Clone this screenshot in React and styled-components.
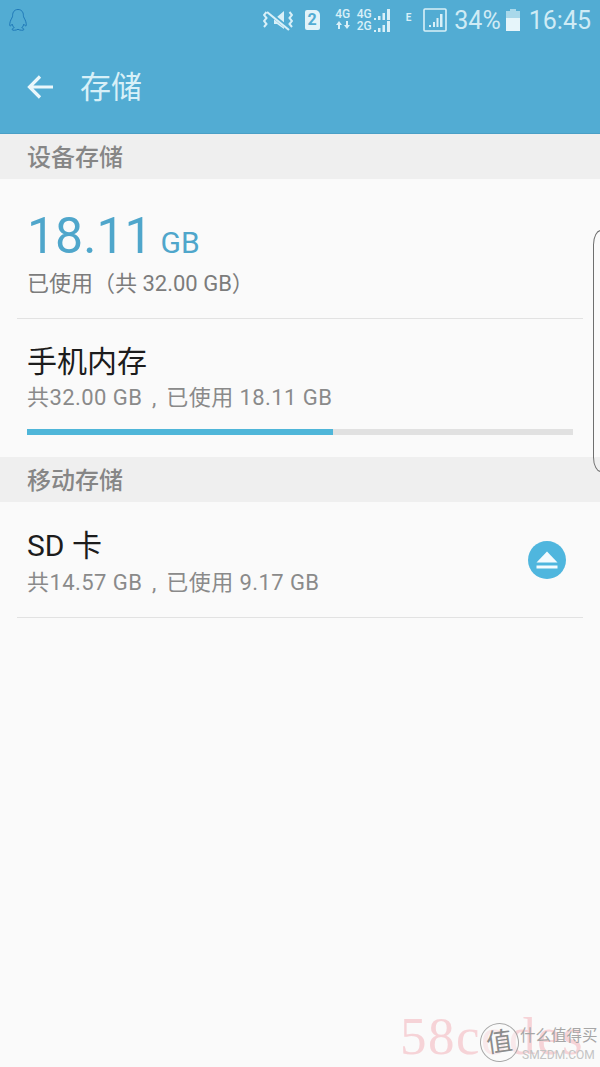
import React from 'react';
import styled, { createGlobalStyle } from 'styled-components';

const FONT = `Roboto, "Noto Sans CJK SC", sans-serif`;

const GlobalStyle = createGlobalStyle`
	html, body {
		margin: 0;
		padding: 0;
		background: #fafafa;
	}
`;

const App = () => (
	<Page>
		<GlobalStyle />
		<AppBar>
			<StatusBar>
				<QQIcon />
				<StatusRight>
					<MuteIcon />
					<SimBadge>2</SimBadge>
					<NetIcons />
					<EdgeLabel>E</EdgeLabel>
					<SignalIcon />
					<StatusText>34%</StatusText>
					<BatteryIcon />
					<StatusText $time>16:45</StatusText>
				</StatusRight>
			</StatusBar>
			<TitleRow>
				<BackIcon />
				<Title>存储</Title>
			</TitleRow>
		</AppBar>

		<SectionHeader>设备存储</SectionHeader>
		<Summary>
			<UsedAmount>
				18.11<UsedUnit>GB</UsedUnit>
			</UsedAmount>
			<SummaryNote>已使用（共 32.00 GB）</SummaryNote>
		</Summary>
		<StorageRow $compact>
			<RowText $compact>
				<RowTitle>手机内存</RowTitle>
				<RowSub>
					共32.00 GB<Comma>,</Comma>已使用 18.11 GB
				</RowSub>
			</RowText>
		</StorageRow>
		<ProgressTrack>
			<ProgressFill style={{ width: '56%' }} />
		</ProgressTrack>

		<SectionHeader>移动存储</SectionHeader>
		<StorageRow>
			<RowText>
				<RowTitle>SD 卡</RowTitle>
				<RowSub>
					共14.57 GB<Comma>,</Comma>已使用 9.17 GB
				</RowSub>
			</RowText>
			<EjectIcon />
		</StorageRow>
		<Divider />

		<ScrollHandle />
		<Watermark>
			<WatermarkSite>58codes</WatermarkSite>
			<WatermarkBadge>值</WatermarkBadge>
			<WatermarkText>
				<span>什么值得买</span>
				<small>SMZDM.COM</small>
			</WatermarkText>
		</Watermark>
	</Page>
);

export default App;

const QQIcon = () => (
	<svg width='20' height='24' viewBox='0 0 20 24' fill='none' stroke='#1e78b8' strokeWidth='1'>
		<path d='M10 1.5c-3.6 0-5.4 2.7-5.4 6 0 1-.2 1.5-.8 2.6-1.2 2.1-2.4 5-2 7.6.9.5 1.7-.4 2.4-1.5.3 1.4 1 2.6 2 3.5-1 .4-2.2.9-2 2 .3.8 3.8.8 5.8-.4 2 1.2 5.5 1.2 5.8.4.2-1.1-1-1.6-2-2 1-.9 1.7-2.1 2-3.5.7 1.1 1.5 2 2.4 1.5.4-2.6-.8-5.5-2-7.6-.6-1.100-.8-1.600-.8-2.600 0-3.300-1.800-6-5.400-6z' />
	</svg>
);

const MuteIcon = () => (
	<svg width='30' height='24' viewBox='0 0 30 24' fill='none'>
		<path d='M11 9h3l7-6v18l-7-5h-3z' fill='#d9f0f8' />
		<path d='M4 3l22 18' stroke='#52acd3' strokeWidth='4' />
		<path d='M4 4l22 18' stroke='#d9f0f8' strokeWidth='2.2' />
		<path d='M3.5 4L1 7l2.5 3L1 13l2.5 3L1 19M26.500 4L29 7l-2.500 3L29 13l-2.500 3L29 19' stroke='#d9f0f8' strokeWidth='2' />
	</svg>
);

const NetIcons = () => (
	<NetGroup>
		<NetColumn>
			<NetLabel>4G</NetLabel>
			<svg width='16' height='8' viewBox='0 0 16 8' fill='#d9f0f8'>
				<path d='M4 0l3 4H5v4H3V4H1zM12 8L9 4h2V0h2v4h2z' />
			</svg>
		</NetColumn>
		<NetColumn>
			<NetLine>
				<NetLabel>4G</NetLabel>
				<MiniBars />
			</NetLine>
			<NetLine>
				<NetLabel>2G</NetLabel>
				<MiniBars />
			</NetLine>
		</NetColumn>
	</NetGroup>
);

const MiniBars = () => (
	<svg width='18' height='11' viewBox='0 0 18 11' fill='#d9f0f8'>
		<rect x='2' y='9' width='2' height='2' />
		<rect x='6' y='7' width='2.5' height='4' />
		<rect x='10.5' y='4' width='2.5' height='7' />
		<rect x='15' y='0' width='3' height='11' />
	</svg>
);

const SignalIcon = () => (
	<svg width='24' height='24' viewBox='0 0 24 24' fill='none'>
		<rect x='1' y='1' width='22' height='22' rx='1' stroke='#d9f0f8' strokeWidth='1.6' />
		<path d='M6 17h2v2H6zM10 14h2v5h-2zM13.5 10h2v9h-2zM17 6h2.5v13H17z' fill='#d9f0f8' />
	</svg>
);

const BatteryIcon = () => (
	<svg width='14' height='22' viewBox='0 0 14 22'>
		<path d='M4 0h6v2h4v20H0V2h4z' fill='#a9d8ea' />
		<path d='M0 9h14v13H0z' fill='#e6f5fa' />
	</svg>
);

const BackIcon = () => (
	<svg width='28' height='28' viewBox='0 0 28 28' fill='none' stroke='#eaf7fb' strokeWidth='3.2'>
		<path d='M27 14H3M14 3.5L3.5 14 14 24.5' />
	</svg>
);

const EjectIcon = () => (
	<svg width='38' height='38' viewBox='0 0 38 38'>
		<circle cx='19' cy='19' r='19' fill='#4fb6de' />
		<path d='M19 10.5L29.5 21.5H8.5z' fill='#f4fbfe' />
		<rect x='8.5' y='24.5' width='21' height='3' fill='#f4fbfe' />
	</svg>
);

const Page = styled.div`
	position: relative;
	width: 600px;
	height: 1067px;
	overflow: hidden;
	background: #fafafa;
	font-family: ${FONT};
`;

const AppBar = styled.header`
	background: #52acd3;
	height: 133px;
	border-bottom: 1px solid #4a9fc6;
`;

const StatusBar = styled.div`
	height: 40px;
	display: flex;
	align-items: center;
	justify-content: space-between;
	padding: 0 9px 0 8px;
`;

const StatusRight = styled.div`
	display: flex;
	align-items: center;
`;

const SimBadge = styled.div`
	width: 15px;
	height: 20px;
	margin-left: 12px;
	background: #e2f3f9;
	border-radius: 2px 5px 2px 2px;
	color: #52acd3;
	font-size: 16px;
	font-weight: 700;
	line-height: 20px;
	text-align: center;
`;

const NetGroup = styled.div`
	display: flex;
	gap: 6px;
	margin-left: 15px;
`;

const NetColumn = styled.div`
	display: flex;
	flex-direction: column;
	align-items: center;
	gap: 1px;
`;

const NetLine = styled.div`
	display: flex;
	align-items: flex-end;
	height: 11px;
`;

const NetLabel = styled.span`
	color: #d9f0f8;
	font-size: 12px;
	font-weight: 500;
	line-height: 11px;
`;

const EdgeLabel = styled.span`
	align-self: flex-start;
	margin: 8px 0 0 16px;
	color: #d9f0f8;
	font-size: 10px;
	font-weight: 700;
	line-height: 12px;
	+ svg {
		margin-left: 12px;
	}
`;

const StatusText = styled.span`
	margin: ${({ $time }) => ($time ? '2px 0 0 9px' : '2px 5px 0 7px')};
	color: #cfebf5;
	font-size: 25px;
	line-height: 30px;
`;

const TitleRow = styled.div`
	height: 93px;
	display: flex;
	align-items: center;
	padding-left: 26px;
	box-sizing: border-box;
`;

const Title = styled.h1`
	margin: 3px 0 0 26px;
	color: #d8f0f8;
	font-size: 31px;
	font-weight: 400;
	line-height: 40px;
`;

const SectionHeader = styled.div`
	height: 45px;
	padding-left: 27px;
	background: #efefef;
	color: #868686;
	font-size: 24px;
	font-weight: 500;
	line-height: 49px;
`;

const Summary = styled.section`
	height: 140px;
	margin: 0 17px;
	padding: 28px 10px 0;
	box-sizing: border-box;
	border-bottom: 1px solid #e2e2e2;
`;

const UsedAmount = styled.div`
	color: #4fa6cb;
	font-size: 50px;
	line-height: 58px;
`;

const UsedUnit = styled.span`
	margin-left: 8px;
	font-size: 30px;
	line-height: 1;
`;

const SummaryNote = styled.div`
	margin-top: 3px;
	color: #7c7c7c;
	font-size: 22px;
	line-height: 32px;
`;

const StorageRow = styled.div`
	height: ${({ $compact }) => ($compact ? '110px' : '115px')};
	display: flex;
	align-items: center;
	justify-content: space-between;
	padding: 0 34px 0 27px;
	box-sizing: border-box;
`;

const RowText = styled.div`
	display: flex;
	flex-direction: column;
	gap: ${({ $compact }) => ($compact ? '0' : '1px')};
	align-self: flex-start;
	padding-top: ${({ $compact }) => ($compact ? '23px' : '24px')};
`;

const RowTitle = styled.div`
	color: #1c1c1c;
	font-size: 30px;
	line-height: 40px;
`;

const RowSub = styled.div`
	color: #8a8a8a;
	font-size: 22px;
	line-height: 32px;
	letter-spacing: 0.43px;
`;

const Comma = styled.span`
	display: inline-block;
	width: 24px;
	text-align: center;
`;

const ProgressTrack = styled.div`
	height: 6px;
	margin: 0 27px 22px;
	background: #e1e1e1;
`;

const ProgressFill = styled.div`
	height: 100%;
	background: #4fb6d9;
`;

const Divider = styled.hr`
	height: 1px;
	margin: 0 17px;
	border: 0;
	background: #e2e2e2;
`;

const ScrollHandle = styled.div`
	position: absolute;
	top: 230px;
	left: 593px;
	width: 16px;
	height: 242px;
	box-sizing: border-box;
	border: 1px solid #6f6f6f;
	border-radius: 14px / 26px;
`;

const Watermark = styled.div`
	position: absolute;
	left: 400px;
	top: 1006px;
	width: 200px;
	height: 58px;
`;

const WatermarkSite = styled.div`
	position: absolute;
	left: 0;
	top: 0;
	color: #f6d3d7;
	font-family: 'Liberation Serif', serif;
	font-size: 53px;
	line-height: 60px;
	letter-spacing: 1.5px;
`;

const WatermarkBadge = styled.div`
	position: absolute;
	left: 80px;
	top: 17px;
	width: 37px;
	height: 37px;
	border: 1px solid #a8a8a8;
	border-radius: 50%;
	background: rgba(250, 250, 250, 0.55);
	color: #8c8c8c;
	font-size: 26px;
	line-height: 36px;
	text-align: center;
	transform: rotate(-8deg);
`;

const WatermarkText = styled.div`
	position: absolute;
	left: 120px;
	top: 21px;
	display: flex;
	flex-direction: column;
	color: #a6a6a6;
	font-size: 15.5px;
	line-height: 19px;

	small {
		padding-left: 2px;
		color: #c4c4c4;
		font-size: 12px;
		line-height: 18px;
	}
`;
